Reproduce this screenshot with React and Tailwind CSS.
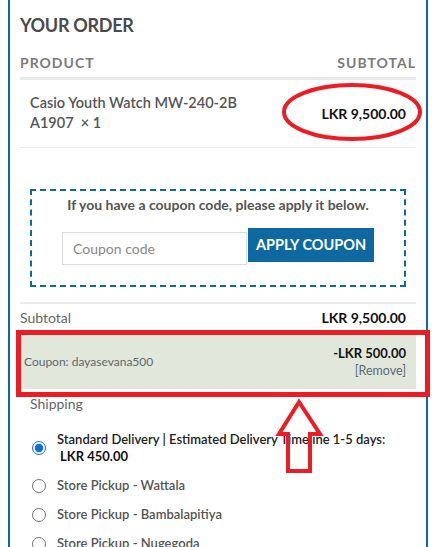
import React from "react";

const shippingOptions = [
  { id: "standard", label: "Standard Delivery | Estimated Delivery Timeline 1-5 days:", price: "LKR 450.00", checked: true },
  { id: "wattala", label: "Store Pickup - Wattala" },
  { id: "bambalapitiya", label: "Store Pickup - Bambalapitiya" },
  { id: "nugegoda", label: "Store Pickup - Nugegoda" },
];

const App = () => {
  return (
    <div className="relative h-[547px] overflow-hidden bg-white font-['Lato','Noto_Sans',sans-serif]">
      <div className="ml-2 w-[420px] border-x-2 border-[#0d69a3] px-[10px] pt-[13px] pb-10">
        <h3 className="text-[18px] font-bold leading-[24px] tracking-[-0.3px] text-[#4a4a4a]">YOUR ORDER</h3>

        {/* table head */}
        <div className="mt-[16px] flex justify-between border-b-[3px] border-[#e9e9e9] pb-[4px] text-[14px] font-bold leading-[20px] tracking-[1px] text-[#7a7a7a]">
          <span>PRODUCT</span>
          <span>SUBTOTAL</span>
        </div>

        {/* product row */}
        <div className="flex items-center justify-between border-b border-[#ececec] px-[10px] pt-[13px] pb-[14px]">
          <div className="w-[240px] text-[14.5px] font-semibold leading-[20px] text-[#555]">
            Casio Youth Watch MW-240-2B A1907&nbsp; × 1
          </div>
          <div className="text-[14px] font-bold text-[#111]">LKR 9,500.00</div>
        </div>

        {/* coupon box */}
        <div className="mx-[10px] mt-[41px] border-2 border-dashed border-[#0d69a3] pt-[5px] pb-[20px]">
          <p className="text-center text-[14px] font-bold leading-[18px] text-[#555]">
            If you have a coupon code, please apply it below.
          </p>
          <div className="mt-[14px] flex justify-center">
            <input
              type="text"
              placeholder="Coupon code"
              className="mt-[4px] h-[33px] w-[185px] border border-[#dcdcdc] px-[10px] text-[14px] text-[#555] placeholder:text-[#888] outline-none"
            />
            <button
              type="button"
              className="ml-px h-[34px] w-[126px] bg-[#0e69a2] text-[14.5px] font-bold text-white"
            >
              APPLY COUPON
            </button>
          </div>
        </div>

        {/* totals */}
        <div className="mt-[15px] flex h-[28px] items-center justify-between border-t-2 border-[#ececec] pr-[10px] text-[14px]">
          <span className="text-[#666]">Subtotal</span>
          <span className="font-bold text-[#111]">LKR 9,500.00</span>
        </div>

        <div className="relative mt-[5px] flex h-[54px] items-center justify-between bg-[#e2e7dc] pr-[10px] pl-[4px]">
          <span className="text-[12px] text-[#5d6670]">Coupon: dayasevana500</span>
          <div className="flex flex-col items-end leading-[17px]">
            <span className="text-[13px] font-bold text-[#111]">-LKR 500.00</span>
            <span className="text-[12.5px] text-[#5b6877]">[Remove]</span>
          </div>
          <div className="pointer-events-none absolute -top-[5px] -right-[14px] -bottom-[8px] -left-[4px] border-[5px] border-[#ec1c24]" />
        </div>

        <div className="mt-[5px] pl-[10px] text-[14px] leading-[20px] text-[#666]">Shipping</div>

        <ul className="mt-[17px] flex flex-col gap-[12px] pl-[10px]">
          {shippingOptions.map((opt) => (
            <li key={opt.id} className="flex items-center gap-[11px]">
              <input
                type="radio"
                name="shipping"
                defaultChecked={opt.checked}
                className="ml-[2px] h-[14px] w-[14px] shrink-0 accent-[#0b6fe0]"
              />
              <label
                className={`text-[13px] font-semibold leading-[17px] ${opt.checked ? "text-[#222]" : "text-[#555]"}`}
              >
                {opt.label}
                {opt.price && (
                  <>
                    <br />
                    <span className="ml-[3px] font-bold text-[#111]">{opt.price}</span>
                  </>
                )}
              </label>
            </li>
          ))}
        </ul>
      </div>

      {/* annotations */}
      <svg className="pointer-events-none absolute top-0 left-0" width="435" height="547">
        <ellipse cx="352" cy="112" rx="68" ry="27" fill="none" stroke="#ec1c24" strokeWidth="4" />
        <polygon
          points="299,402 279,434 288,434 288,471 310,471 310,434 320,434"
          fill="none"
          stroke="#ec1c24"
          strokeWidth="4"
          strokeLinejoin="miter"
        />
      </svg>
    </div>
  );
};

export default App;
